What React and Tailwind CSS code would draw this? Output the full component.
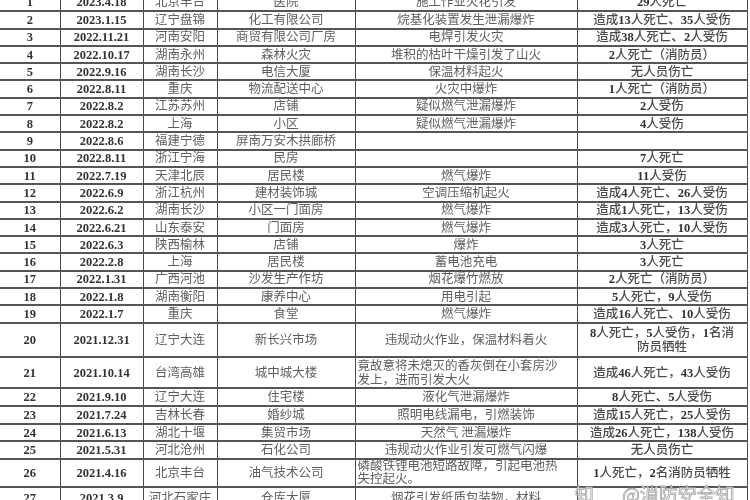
const rows = [
  ["1", "2023.4.18", "北京丰台", "医院", "施工作业火花引发", "29人死亡"],
  ["2", "2023.1.15", "辽宁盘锦", "化工有限公司", "烷基化装置发生泄漏爆炸", "造成13人死亡、35人受伤"],
  ["3", "2022.11.21", "河南安阳", "商贸有限公司厂房", "电焊引发火灾", "造成38人死亡、2人受伤"],
  ["4", "2022.10.17", "湖南永州", "森林火灾", "堆积的枯叶干燥引发了山火", "2人死亡（消防员）"],
  ["5", "2022.9.16", "湖南长沙", "电信大厦", "保温材料起火", "无人员伤亡"],
  ["6", "2022.8.11", "重庆", "物流配送中心", "火灾中爆炸", "1人死亡（消防员）"],
  ["7", "2022.8.2", "江苏苏州", "店铺", "疑似燃气泄漏爆炸", "2人受伤"],
  ["8", "2022.8.2", "上海", "小区", "疑似燃气泄漏爆炸", "4人受伤"],
  ["9", "2022.8.6", "福建宁德", "屏南万安木拱廊桥", "", ""],
  ["10", "2022.8.11", "浙江宁海", "民房", "", "7人死亡"],
  ["11", "2022.7.19", "天津北辰", "居民楼", "燃气爆炸", "11人受伤"],
  ["12", "2022.6.9", "浙江杭州", "建材装饰城", "空调压缩机起火", "造成4人死亡、26人受伤"],
  ["13", "2022.6.2", "湖南长沙", "小区一门面房", "燃气爆炸", "造成1人死亡，13人受伤"],
  ["14", "2022.6.21", "山东泰安", "门面房", "燃气爆炸", "造成3人死亡，10人受伤"],
  ["15", "2022.6.3", "陕西榆林", "店铺", "爆炸", "3人死亡"],
  ["16", "2022.2.8", "上海", "居民楼", "蓄电池充电", "3人死亡"],
  ["17", "2022.1.31", "广西河池", "沙发生产作坊", "烟花爆竹燃放", "2人死亡（消防员）"],
  ["18", "2022.1.8", "湖南衡阳", "康养中心", "用电引起", "5人死亡，9人受伤"],
  ["19", "2022.1.7", "重庆", "食堂", "燃气爆炸", "造成16人死亡、10人受伤"],
]

const rows2 = [
  ["22", "2021.9.10", "辽宁大连", "住宅楼", "液化气泄漏爆炸", "8人死亡、5人受伤"],
  ["23", "2021.7.24", "吉林长春", "婚纱城", "照明电线漏电，引燃装饰", "造成15人死亡，25人受伤"],
  ["24", "2021.6.13", "湖北十堰", "集贸市场", "天然气 泄漏爆炸", "造成26人死亡，138人受伤"],
  ["25", "2021.5.31", "河北沧州", "石化公司", "违规动火作业引发可燃气闪爆", "无人员伤亡"],
]

const cell = "border-r border-[#4a4a4a] text-center align-middle p-0 whitespace-nowrap overflow-hidden"
const num = "font-bold text-[#333]"
const cjk = "text-[#5e5e5e]"
const res = "text-[#4a4a4a] font-medium"

// digits in the result column are bold in the scan
function Result({ text }) {
  return text.split(/(\d+)/).map((part, i) =>
    /^\d+$/.test(part) ? (
      <span key={i} className="font-bold text-[#333]">{part}</span>
    ) : (
      <span key={i}>{part}</span>
    )
  )
}

function Row({ r, h }) {
  return (
    <tr className={`${h} border-b-2 border-[#555]`}>
      <td className={`${cell} ${num}`}>{r[0]}</td>
      <td className={`${cell} ${num}`}>{r[1]}</td>
      <td className={`${cell} ${cjk}`}>{r[2]}</td>
      <td className={`${cell} ${cjk}`}>{r[3]}</td>
      <td className={`${cell} ${cjk}`}>{r[4]}</td>
      <td className={`${cell} ${res}`}><Result text={r[5]} /></td>
    </tr>
  )
}

export default function App() {
  return (
    <div className="relative w-[750px] h-[500px] overflow-hidden bg-white">
      <table
        className="-mt-[6px] w-[747px] table-fixed border-collapse text-[12.5px] leading-[14px] blur-[0.35px]"
        style={{ fontFamily: '"Liberation Serif", "Noto Sans CJK SC", serif' }}
      >
        <colgroup>
          <col className="w-[60px]" />
          <col className="w-[83px]" />
          <col className="w-[74px]" />
          <col className="w-[138px]" />
          <col className="w-[222px]" />
          <col className="w-[170px]" />
        </colgroup>
        <tbody>
          {rows.map((r) => (
            <Row key={r[0]} r={r} h="h-[17.3px]" />
          ))}
          <tr className="h-[34.6px] border-b-2 border-[#555]">
            <td className={`${cell} ${num}`}>20</td>
            <td className={`${cell} ${num}`}>2021.12.31</td>
            <td className={`${cell} ${cjk}`}>辽宁大连</td>
            <td className={`${cell} ${cjk}`}>新长兴市场</td>
            <td className={`${cell} ${cjk}`}>违规动火作业，保温材料着火</td>
            <td className={`${cell} ${res}`}>
              <Result text="8人死亡，5人受伤，1名消" />
              <br />
              防员牺牲
            </td>
          </tr>
          <tr className="h-[31px] border-b-2 border-[#555]">
            <td className={`${cell} ${num}`}>21</td>
            <td className={`${cell} ${num}`}>2021.10.14</td>
            <td className={`${cell} ${cjk}`}>台湾高雄</td>
            <td className={`${cell} ${cjk}`}>城中城大楼</td>
            <td className={`${cell} ${cjk} text-left pl-[2px]`}>
              竟故意将未熄灭的香灰倒在小套房沙
              <br />
              发上，进而引发大火
            </td>
            <td className={`${cell} ${res}`}><Result text="造成46人死亡，43人受伤" /></td>
          </tr>
          {rows2.map((r) => (
            <Row key={r[0]} r={r} h="h-[17.75px]" />
          ))}
          <tr className="h-[26px] border-b-2 border-[#555]">
            <td className={`${cell} ${num}`}>26</td>
            <td className={`${cell} ${num}`}>2021.4.16</td>
            <td className={`${cell} ${cjk}`}>北京丰台</td>
            <td className={`${cell} ${cjk}`}>油气技术公司</td>
            <td className={`${cell} ${cjk} text-left pl-[2px] leading-[13px]`}>
              磷酸铁锂电池短路故障，引起电池热
              <br />
              失控起火。
            </td>
            <td className={`${cell} ${res}`}><Result text="1人死亡，2名消防员牺牲" /></td>
          </tr>
          <tr className="h-[20px]">
            <td className={`${cell} ${num} align-top pt-[3px]`}>27</td>
            <td className={`${cell} ${num} align-top pt-[3px]`}>2021.3.9</td>
            <td className={`${cell} ${cjk} align-top pt-[3px]`}>河北石家庄</td>
            <td className={`${cell} ${cjk} align-top pt-[3px]`}>仓库大厦</td>
            <td className={`${cell} ${cjk} align-top pt-[3px]`}>烟花引发纸质包装物，材料</td>
            <td className={`${cell} ${cjk}`}></td>
          </tr>
        </tbody>
      </table>
      <div
        className="absolute left-[575px] top-[480px] flex items-baseline gap-[10px] text-[19px] text-white opacity-90"
        style={{ fontFamily: '"Noto Sans CJK SC", sans-serif', WebkitTextStroke: "0.8px #9a9a9a" }}
      >
        <span>知乎</span>
        <span>@消防安全知识</span>
      </div>
    </div>
  )
}
